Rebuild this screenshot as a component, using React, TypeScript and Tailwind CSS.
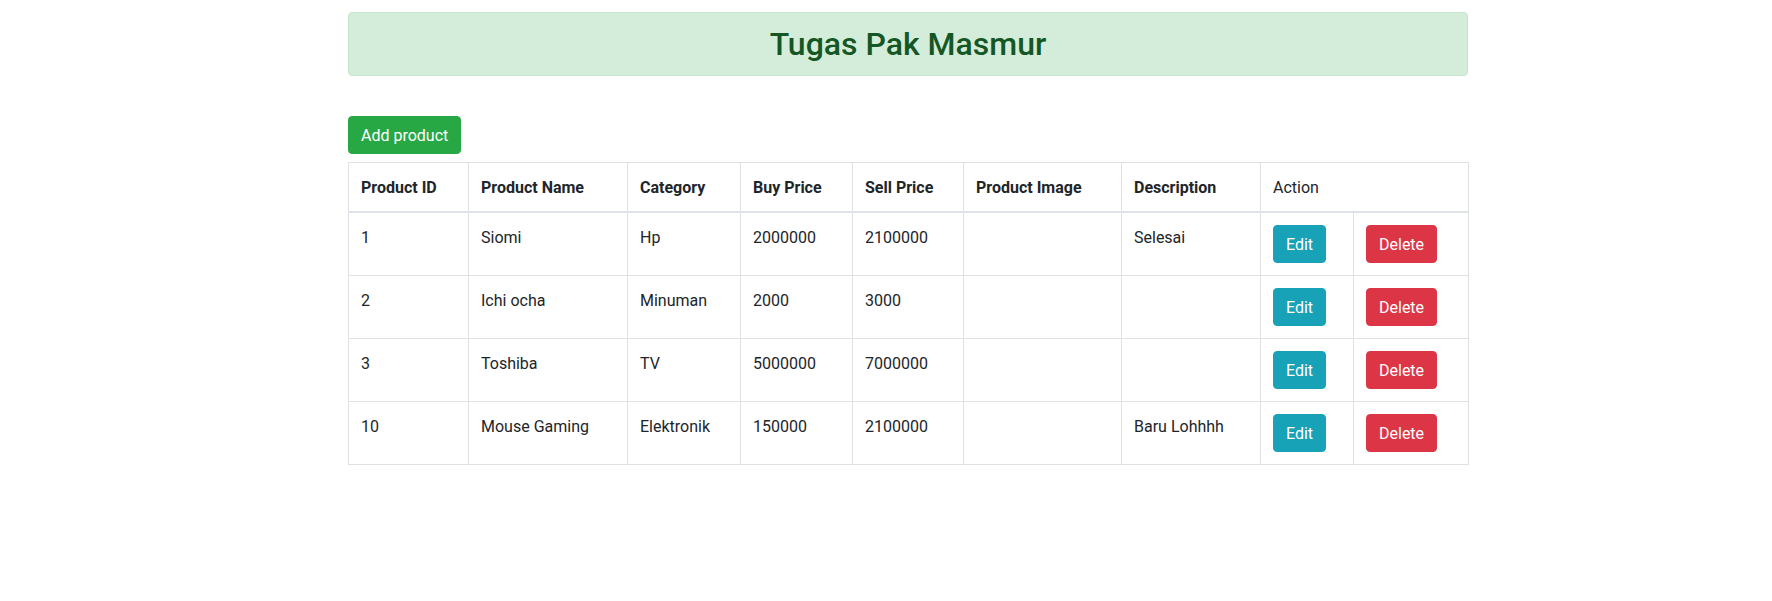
import React from "react";

const rows = [
  { id: "1", name: "Siomi", cat: "Hp", buy: "2000000", sell: "2100000", desc: "Selesai" },
  { id: "2", name: "Ichi ocha", cat: "Minuman", buy: "2000", sell: "3000", desc: "" },
  { id: "3", name: "Toshiba", cat: "TV", buy: "5000000", sell: "7000000", desc: "" },
  { id: "10", name: "Mouse Gaming", cat: "Elektronik", buy: "150000", sell: "2100000", desc: "Baru Lohhhh" },
];

const headers = ["Product ID", "Product Name", "Category", "Buy Price", "Sell Price", "Product Image", "Description"];

export default function App() {
  return (
    <div className="min-h-[601px] bg-white text-[#212529] text-[16px] leading-[24px]" style={{ fontFamily: "Roboto, 'Liberation Sans', sans-serif" }}>
      <div className="pt-[12px] ml-[348px] w-[1120px]">
        <div className="bg-[#d4edda] border border-[#c3e6cb] rounded-[4px] px-[20px] py-[12px] mb-[40px]">
          <h1 className="text-center text-[32px] leading-[38px] font-medium text-[#155724]">Tugas Pak Masmur</h1>
        </div>
        <button className="bg-[#28a745] border border-[#28a745] text-white rounded-[4px] px-[12px] pt-[7px] pb-[5px] text-[16px] leading-[24px] mb-[8px]">
          Add product
        </button>
        <table className="table-fixed w-[1120px] border-collapse border border-[#dee2e6]">
          <colgroup>
            <col className="w-[120px]" />
            <col className="w-[159px]" />
            <col className="w-[113px]" />
            <col className="w-[112px]" />
            <col className="w-[111px]" />
            <col className="w-[158px]" />
            <col className="w-[139px]" />
            <col className="w-[93px]" />
            <col className="w-[115px]" />
          </colgroup>
          <thead>
            <tr>
              {headers.map((h) => (
                <th key={h} className="text-left font-bold align-top px-[12px] pt-[13px] pb-[11px] border border-[#dee2e6] border-b-2">
                  {h}
                </th>
              ))}
              <th colSpan={2} className="text-left font-normal align-top px-[12px] pt-[13px] pb-[11px] border border-[#dee2e6] border-b-2">
                Action
              </th>
            </tr>
          </thead>
          <tbody>
            {rows.map((r) => (
              <tr key={r.id}>
                <td className="align-top px-[12px] pt-[13px] pb-[11px] border border-[#dee2e6]">{r.id}</td>
                <td className="align-top px-[12px] pt-[13px] pb-[11px] border border-[#dee2e6]">{r.name}</td>
                <td className="align-top px-[12px] pt-[13px] pb-[11px] border border-[#dee2e6]">{r.cat}</td>
                <td className="align-top px-[12px] pt-[13px] pb-[11px] border border-[#dee2e6]">{r.buy}</td>
                <td className="align-top px-[12px] pt-[13px] pb-[11px] border border-[#dee2e6]">{r.sell}</td>
                <td className="align-top px-[12px] pt-[13px] pb-[11px] border border-[#dee2e6]"></td>
                <td className="align-top px-[12px] pt-[13px] pb-[11px] border border-[#dee2e6]">{r.desc}</td>
                <td className="align-top p-[12px] border border-[#dee2e6]">
                  <button className="bg-[#17a2b8] border border-[#17a2b8] text-white rounded-[4px] px-[12px] pt-[7px] pb-[5px] text-[16px] leading-[24px]">
                    Edit
                  </button>
                </td>
                <td className="align-top p-[12px] border border-[#dee2e6]">
                  <button className="bg-[#dc3545] border border-[#dc3545] text-white rounded-[4px] px-[12px] pt-[7px] pb-[5px] text-[16px] leading-[24px]">
                    Delete
                  </button>
                </td>
              </tr>
            ))}
          </tbody>
        </table>
      </div>
    </div>
  );
}
